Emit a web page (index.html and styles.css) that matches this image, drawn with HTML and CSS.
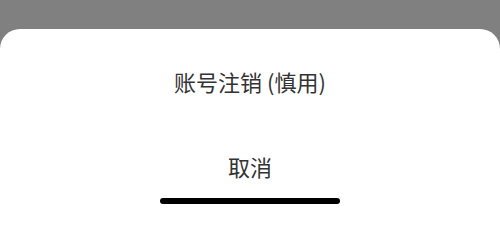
FILE: index.html
```html
<!DOCTYPE html>
<html lang="zh-CN">
<head>
<meta charset="utf-8">
<link rel="stylesheet" href="styles.css">
</head>
<body>
<div class="overlay">
  <div class="sheet">
    <div class="option">账号注销 (慎用)</div>
    <div class="option cancel">取消</div>
    <div class="home-indicator"></div>
  </div>
</div>
</body>
</html>
```

FILE: styles.css
```css
html, body {
  margin: 0;
  padding: 0;
  width: 500px;
  min-height: 100vh;
}
html {
  background: #ffffff;
}
body {
  font-family: "Noto Sans CJK SC", "Noto Sans", sans-serif;
}
.overlay {
  display: flex;
  flex-direction: column;
  min-height: 100vh;
  padding-top: 29px;
  box-sizing: border-box;
  background: #808080;
}
.sheet {
  flex: 1;
  background: #ffffff;
  border-radius: 20px 20px 0 0;
  display: flex;
  flex-direction: column;
  align-items: center;
  padding-top: 37px;
  box-sizing: border-box;
}
.option {
  font-size: 22px;
  line-height: 30px;
  height: 30px;
  color: #333333;
  text-align: center;
}
.cancel {
  margin-top: 55px;
}
.home-indicator {
  margin-top: 17px;
  width: 180px;
  height: 6px;
  border-radius: 3px;
  background: #000000;
}
```
